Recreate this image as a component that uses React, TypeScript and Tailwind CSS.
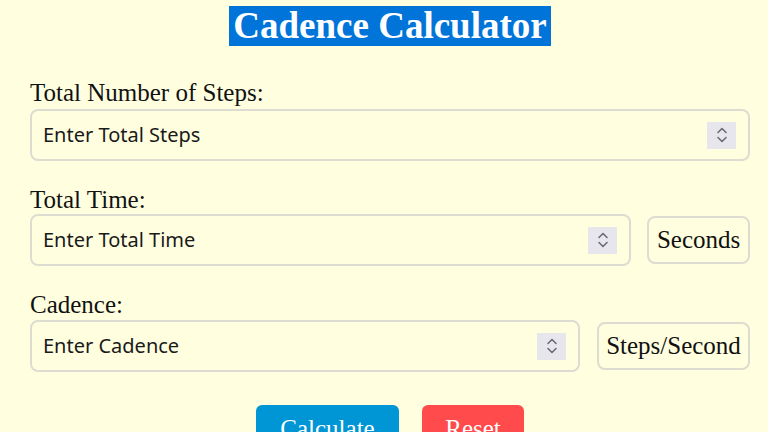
import React from "react";

const Spinner = () => (
  <div className="w-[29px] h-[27px] bg-[#e6e6ec] flex items-center justify-center shrink-0">
    <svg width="14" height="20" viewBox="0 0 14 20" fill="none" stroke="#6b6b75" strokeWidth="1.6" strokeLinecap="round" strokeLinejoin="round">
      <path d="M3 7.5 L7 3.5 L11 7.5" />
      <path d="M3 12.5 L7 16.5 L11 12.5" />
    </svg>
  </div>
);

const Field = ({ placeholder, className }: { placeholder: string; className: string }) => (
  <div className={`h-[52px] rounded-[8px] border-2 border-[#dcdcd0] flex items-center pl-[11px] pr-[12px] ${className}`}>
    <span className="flex-1 text-[20px] text-[#1a1a1a] font-['Noto_Sans',sans-serif]">{placeholder}</span>
    <Spinner />
  </div>
);

const Unit = ({ label, className }: { label: string; className: string }) => (
  <div className={`h-[48px] rounded-[8px] border-2 border-[#dcdcd0] flex items-center justify-center text-[25px] text-[#111] font-['Liberation_Serif',serif] ${className}`}>
    {label}
  </div>
);

export default function App() {
  return (
    <div className="w-[768px] h-[432px] overflow-hidden bg-[#ffffe0] font-['Liberation_Serif',serif] text-[#111]">
      <div className="flex justify-center pt-[6px] pl-[12px]">
        <h1 className="bg-[#0074d9] text-white font-bold text-[37px] leading-[40px] px-[4px]">Cadence Calculator</h1>
      </div>
      <div className="pl-[30px] pr-[18px] mt-[33px] flex flex-col">
        <label className="text-[25px] leading-[28px]">Total Number of Steps:</label>
        <Field placeholder="Enter Total Steps" className="w-full mt-[2px]" />
        <label className="text-[25px] leading-[28px] mt-[25px]">Total Time:</label>
        <div className="flex items-center mt-[0px] gap-[16px]">
          <Field placeholder="Enter Total Time" className="w-[602px]" />
          <Unit label="Seconds" className="w-[103px]" />
        </div>
        <label className="text-[25px] leading-[28px] mt-[25px]">Cadence:</label>
        <div className="flex items-center mt-[1px] gap-[17px]">
          <Field placeholder="Enter Cadence" className="w-[550px]" />
          <Unit label="Steps/Second" className="w-[153px]" />
        </div>
        <div className="flex justify-center gap-[23px] mt-[33px]">
          <button className="w-[143px] h-[48px] rounded-[6px] bg-[#0096d6] text-white text-[25px] font-['Liberation_Serif',serif]">Calculate</button>
          <button className="w-[102px] h-[48px] rounded-[6px] bg-[#ff4b4b] text-white text-[25px] font-['Liberation_Serif',serif]">Reset</button>
        </div>
      </div>
    </div>
  );
}
